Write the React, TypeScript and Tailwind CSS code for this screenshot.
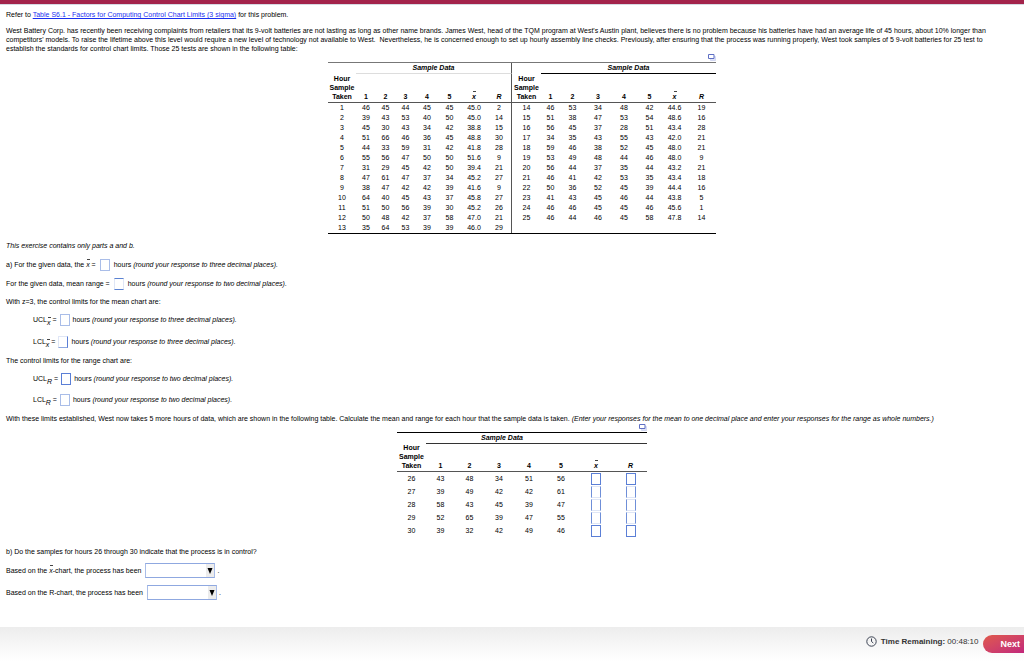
type Edge = "soft" | "topBottom" | "sides" | "rightBottom" | "full";

const LEFT = [
  ["1", "46", "45", "44", "45", "45", "45.0", "2"],
  ["2", "39", "43", "53", "40", "50", "45.0", "14"],
  ["3", "45", "30", "43", "34", "42", "38.8", "15"],
  ["4", "51", "66", "46", "36", "45", "48.8", "30"],
  ["5", "44", "33", "59", "31", "42", "41.8", "28"],
  ["6", "55", "56", "47", "50", "50", "51.6", "9"],
  ["7", "31", "29", "45", "42", "50", "39.4", "21"],
  ["8", "47", "61", "47", "37", "34", "45.2", "27"],
  ["9", "38", "47", "42", "42", "39", "41.6", "9"],
  ["10", "64", "40", "45", "43", "37", "45.8", "27"],
  ["11", "51", "50", "56", "39", "30", "45.2", "26"],
  ["12", "50", "48", "42", "37", "58", "47.0", "21"],
  ["13", "35", "64", "53", "39", "39", "46.0", "29"],
];

const RIGHT = [
  ["14", "46", "53", "34", "48", "42", "44.6", "19"],
  ["15", "51", "38", "47", "53", "54", "48.6", "16"],
  ["16", "56", "45", "37", "28", "51", "43.4", "28"],
  ["17", "34", "35", "43", "55", "43", "42.0", "21"],
  ["18", "59", "46", "38", "52", "45", "48.0", "21"],
  ["19", "53", "49", "48", "44", "46", "48.0", "9"],
  ["20", "56", "44", "37", "35", "44", "43.2", "21"],
  ["21", "46", "41", "42", "53", "35", "43.4", "18"],
  ["22", "50", "36", "52", "45", "39", "44.4", "16"],
  ["23", "41", "43", "45", "46", "44", "43.8", "5"],
  ["24", "46", "46", "45", "45", "46", "45.6", "1"],
  ["25", "46", "44", "46", "45", "58", "47.8", "14"],
  ["", "", "", "", "", "", "", ""],
];

const NEW_HOURS = [
  ["26", "43", "48", "34", "51", "56"],
  ["27", "39", "49", "42", "42", "61"],
  ["28", "58", "43", "45", "39", "47"],
  ["29", "52", "65", "39", "47", "55"],
  ["30", "39", "32", "42", "49", "46"],
];

const EDGES: Record<Edge, string> = {
  soft: "border-[#a9bde8]",
  topBottom: "border-x-[#dfe6f6] border-y-[#5b82d2]",
  sides: "border-x-[#6f8fd8] border-y-[#dfe6f6]",
  rightBottom: "border-l-[#dfe6f6] border-t-[#dfe6f6] border-r-[#5b7fd6] border-b-[#8fa8e0]",
  full: "border-[#5b7fd6]",
};

function XBar() {
  return (
    <i className="relative inline-block">
      x<span className="absolute -top-px left-px h-px w-[3px] bg-[#444]" />
    </i>
  );
}

function Answer({ label, edge = "soft" }: { label: string; edge?: Edge }) {
  return <input type="text" aria-label={label} className={`block h-3 w-[10px] shrink-0 border bg-white p-0 text-[7px] outline-none ${EDGES[edge]}`} />;
}

function PopOut() {
  return (
    <button type="button" aria-label="Open data table" className="block">
      <svg width="8" height="7" viewBox="0 0 8 7" fill="none">
        <path d="M2.5 2.5h5v4h-5z" fill="#dfe3f7" stroke="#d3d8f3" />
        <path d="M.5.5h5.5v4H.5z" fill="#fff" stroke="#5f6fc4" />
      </svg>
    </button>
  );
}

function HourHead() {
  return (
    <th rowSpan={2} className="border-b border-b-[#555] px-0 pb-px pt-0 align-bottom">
      Hour<br />Sample<br />Taken
    </th>
  );
}

function ColumnHeads({ last = "" }: { last?: string }) {
  return (
    <>
      {["1", "2", "3", "4", "5"].map(n => <th key={n} className="border-b border-[#555] px-0 pb-px pt-0 align-bottom">{n}</th>)}
      <th className="border-b border-[#555] px-0 pb-px pt-0 align-bottom"><XBar /></th>
      <th className={`border-b border-b-[#555] px-0 pb-px pt-0 align-bottom italic ${last}`}>R</th>
    </>
  );
}

function SampleTable() {
  return (
    <table className="table-fixed border-separate border-spacing-0 border-y border-t-[#777] border-b-black text-center">
      <colgroup>
        <col className="w-[28px]" /><col className="w-[20px]" /><col className="w-[19px]" /><col className="w-[21px]" />
        <col className="w-[22px]" /><col className="w-[23px]" /><col className="w-[26px]" /><col className="w-[25px]" />
        <col className="w-[29px]" /><col className="w-[19px]" /><col className="w-[25px]" /><col className="w-[26px]" />
        <col className="w-[26px]" /><col className="w-[25px]" /><col className="w-[25px]" /><col className="w-[29px]" />
      </colgroup>
      <thead>
        <tr className="h-[11px]">
          <HourHead />
          <th colSpan={7} className="border-b border-r border-b-[#ddd] border-r-[#555] px-0 pb-px pt-0 italic">Sample Data</th>
          <HourHead />
          <th colSpan={7} className="border-b border-black px-0 pb-px pt-0 italic">Sample Data</th>
        </tr>
        <tr className="h-[29px]">
          <ColumnHeads last="border-r border-r-[#555]" />
          <ColumnHeads />
        </tr>
      </thead>
      <tbody>
        {LEFT.map((row, r) => (
          <tr key={row[0]} className="h-[10px]">
            {row.map((v, i) => <td key={i} className={`px-0 pb-px pt-0 ${i === 7 ? "border-r border-[#555]" : ""}`}>{v}</td>)}
            {RIGHT[r].map((v, i) => <td key={i} className="px-0 pb-px pt-0">{v}</td>)}
          </tr>
        ))}
      </tbody>
    </table>
  );
}

function NewHoursTable() {
  return (
    <table className="table-fixed border-separate border-spacing-0 border-t border-black text-center">
      <colgroup>
        <col className="w-[29px]" /><col className="w-[29px]" /><col className="w-[29px]" /><col className="w-[30px]" />
        <col className="w-[30px]" /><col className="w-[34px]" /><col className="w-[36px]" /><col className="w-[33px]" />
      </colgroup>
      <thead>
        <tr className="h-[11px]">
          <HourHead />
          <th colSpan={5} className="border-b border-[#333] px-0 pb-px pt-0 italic">Sample Data</th>
          <th colSpan={2} className="border-b border-[#333] p-0" />
        </tr>
        <tr className="h-[28px]"><ColumnHeads /></tr>
      </thead>
      <tbody>
        {NEW_HOURS.map((row, r) => (
          <tr key={row[0]} className="h-[13px]">
            {row.map((v, i) => <td key={i} className="p-0 align-middle">{v}</td>)}
            {["mean", "range"].map(kind => (
              <td key={kind} className="p-0 align-bottom">
                <div className="flex justify-center">
                  <Answer label={`Hour ${row[0]} ${kind}`} edge={r === 0 || r === 4 ? "full" : "sides"} />
                </div>
              </td>
            ))}
          </tr>
        ))}
      </tbody>
    </table>
  );
}

function Limit({ name, sub, places, edge, className }: { name: string; sub: "x" | "R"; places: string; edge: Edge; className: string }) {
  return (
    <div className={`flex h-[11px] items-center gap-[3px] pl-[27px] ${className}`}>
      <span className="whitespace-nowrap">{name}<span className="relative top-[3px]">{sub === "x" ? <XBar /> : <i>R</i>}</span> =</span>
      <Answer label={`${name} ${sub}`} edge={edge} />
      <span>hours <i>(round your response to {places} decimal places).</i></span>
    </div>
  );
}

function Choice({ label }: { label: string }) {
  return (
    <span className="relative ml-1 mr-[2px] block">
      <select aria-label={label} className="block h-[15px] w-[70px] appearance-none border border-x-[#a9bde8] border-y-[#8fa8e0] bg-white p-0 text-[7px] outline-none">
        <option></option>
        <option>in control</option>
        <option>out of control</option>
      </select>
      <span className="pointer-events-none absolute inset-y-px right-px flex w-2 items-center justify-center bg-[#ececec]">
        <svg width="6" height="6" viewBox="0 0 6 6"><path d="M.5 0h5L3 6z" fill="#000" /></svg>
      </span>
    </span>
  );
}

export default function App() {
  return (
    <div className="flex min-h-screen flex-col overflow-x-hidden bg-white font-['Liberation_Sans',Arial,sans-serif] text-[7px] leading-[9px] text-black">
      <div className="h-[5px] border-b border-[#d5d9e2] bg-[#a3234b]" />
      <main className="flex flex-col px-[6px]">
        <p className="mt-[5px]">
          Refer to <a href="#table-s6-1" className="text-[#1a2ff0] underline">Table S6.1 - Factors for Computing Control Chart Limits (3 sigma)</a> for this problem.
        </p>
        <p className="mt-[7px] pr-5">
          West Battery Corp. has recently been receiving complaints from retailers that its 9-volt batteries are not lasting as long as other name brands. James West, head of the TQM program at West's Austin plant, believes there is no problem because his batteries have had an average life of 45 hours, about 10% longer than competitors' models. To raise the lifetime above this level would require a new level of technology not available to West.&nbsp; Nevertheless, he is concerned enough to set up hourly assembly line checks. Previously, after ensuring that the process was running properly, West took samples of 5 9-volt batteries for 25 test to establish the standards for control chart limits. Those 25 tests are shown in the following table:
        </p>

        <div className="flex flex-col self-center pl-[20px]">
          <div className="flex h-[9px] items-center justify-end"><PopOut /></div>
          <SampleTable />
        </div>

        <p className="mt-[7px] italic">This exercise contains only parts a and b.</p>
        <div className="mt-[9px] flex h-[11px] items-center gap-1">
          <span>a) For the given data, the <XBar /> =</span>
          <Answer label="Overall mean" />
          <span>hours <i>(round your response to three decimal places).</i></span>
        </div>
        <div className="mt-2 flex h-[11px] items-center gap-1">
          <span>For the given data, mean range =</span>
          <Answer label="Mean range" edge="topBottom" />
          <span>hours <i>(round your response to two decimal places).</i></span>
        </div>
        <p className="mt-2">With z=3, the control limits for the mean chart are:</p>
        <Limit name="UCL" sub="x" places="three" edge="soft" className="mt-2" />
        <Limit name="LCL" sub="x" places="three" edge="rightBottom" className="mt-[11px]" />
        <p className="mt-[9px]">The control limits for the range chart are:</p>
        <Limit name="UCL" sub="R" places="two" edge="full" className="mt-2" />
        <Limit name="LCL" sub="R" places="two" edge="soft" className="mt-[10px]" />

        <p className="mt-[9px]">
          With these limits established, West now takes 5 more hours of data, which are shown in the following table. Calculate the mean and range for each hour that the sample data is taken. <i>(Enter your responses for the mean to one decimal place and enter your responses for the range as whole numbers.)</i>
        </p>
        <div className="flex flex-col self-center pl-[20px]">
          <div className="flex h-[9px] items-center justify-end"><PopOut /></div>
          <NewHoursTable />
        </div>

        <p className="mt-[10px]">b) Do the samples for hours 26 through 30 indicate that the process is in control?</p>
        {["x", "R"].map(chart => (
          <div key={chart} className="mt-[7px] flex h-[15px] items-center">
            <span>Based on the {chart === "x" ? <XBar /> : "R"}-chart, the process has been</span>
            <Choice label={`${chart}-chart result`} />.
          </div>
        ))}
      </main>

      <footer className="mt-auto flex h-[34px] items-center justify-end bg-linear-to-b from-[#ededed] to-white text-[8px]">
        <div className="mr-[5px] flex items-center gap-1 pb-[6px] text-[#333]">
          <svg width="11" height="11" viewBox="0 0 11 11" fill="none" stroke="#3b4252">
            <circle cx="5.5" cy="5.5" r="4.7" />
            <path d="M5.5 2.5v3l1.8 1.5" />
          </svg>
          <span><b>Time Remaining:</b> 00:48:10</span>
        </div>
        <button type="button" className="h-[18px] rounded-l-full bg-linear-to-br from-[#e0594a] to-[#c2257a] pl-[17px] pr-1 text-[9px] font-bold text-white">Next</button>
      </footer>
    </div>
  );
}
